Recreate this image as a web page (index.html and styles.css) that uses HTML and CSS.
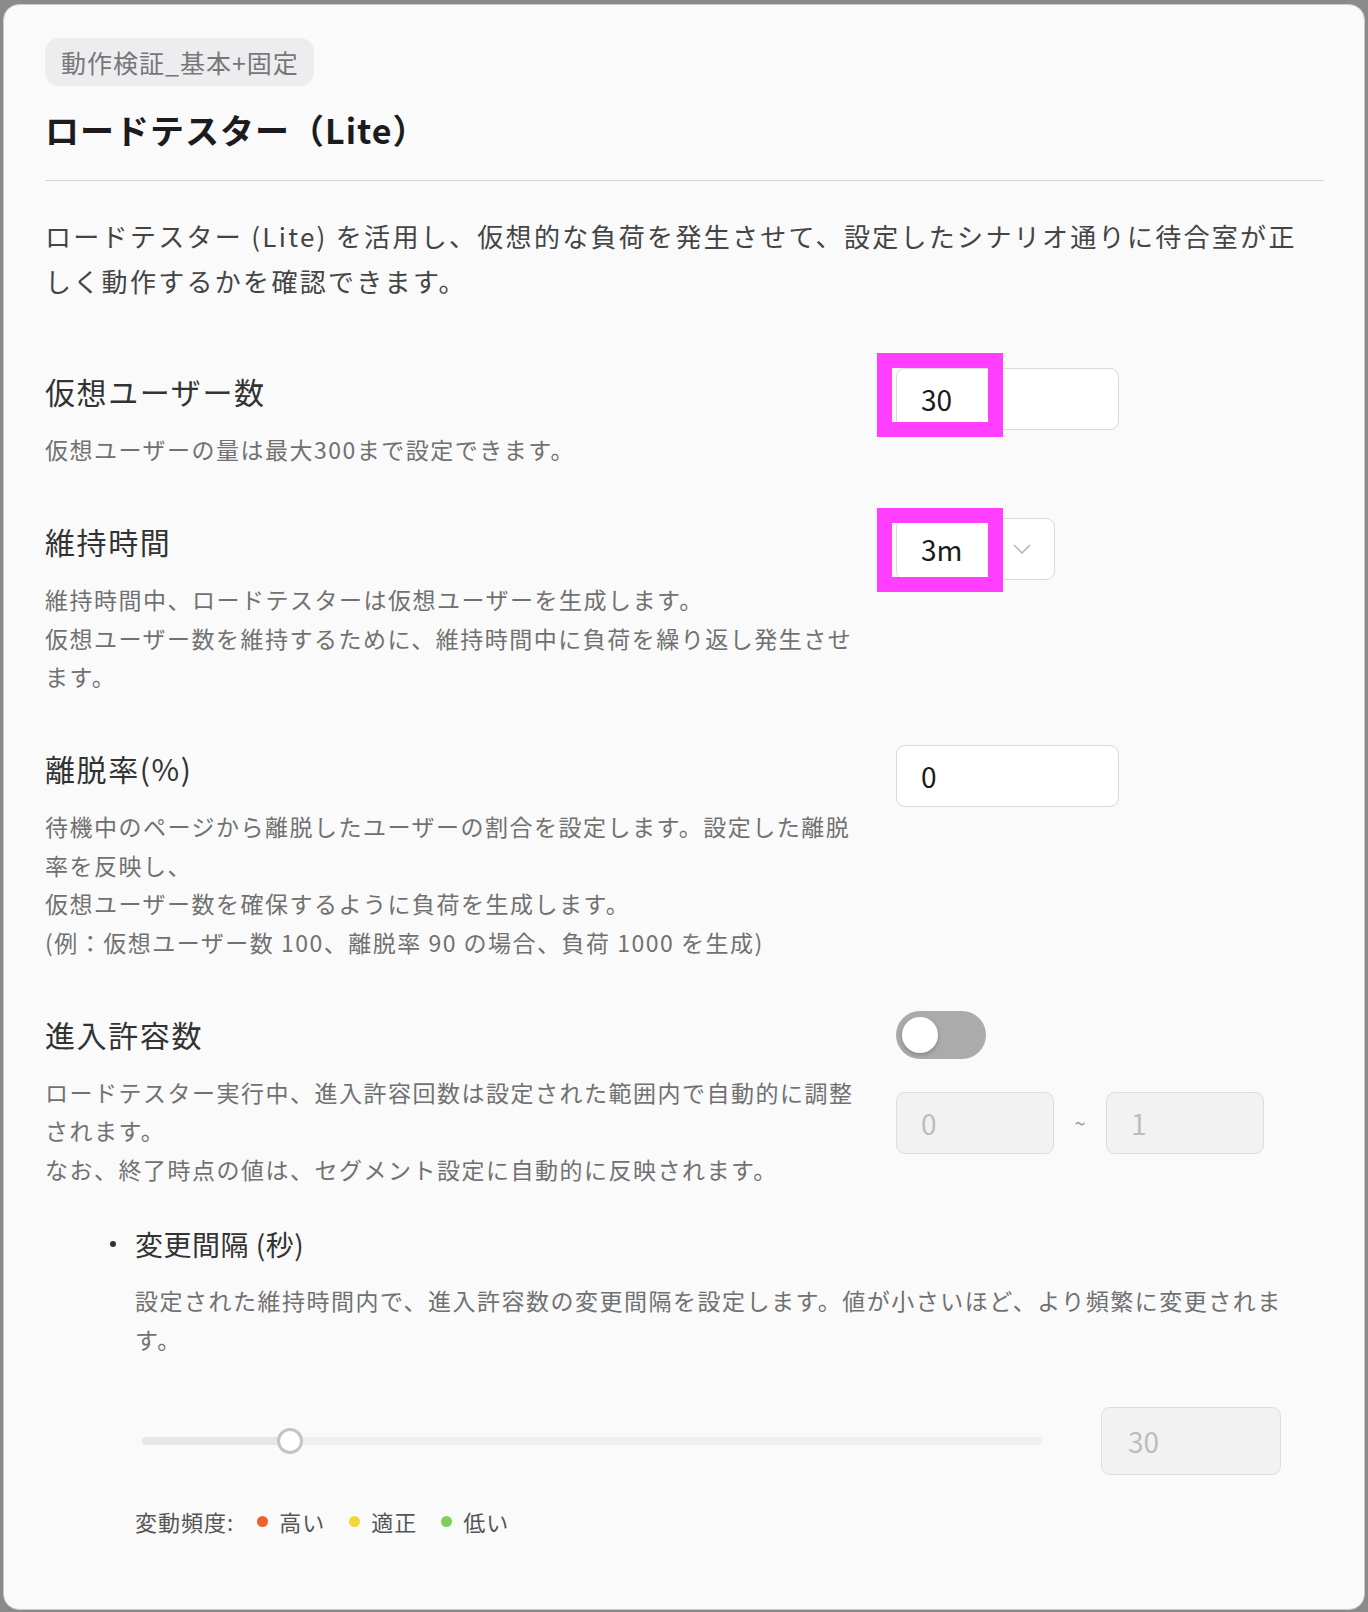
FILE: index.html
```html
<!DOCTYPE html>
<html lang="ja">
<head>
<meta charset="utf-8">
<title>ロードテスター（Lite）</title>
<link rel="stylesheet" href="styles.css">
</head>
<body>
<div class="card">
  <div class="badge">動作検証_基本+固定</div>
  <h1 class="title">ロードテスター（Lite）</h1>
  <div class="divider"></div>
  <p class="intro">ロードテスター (Lite) を活用し、仮想的な負荷を発生させて、設定したシナリオ通りに待合室が正しく動作するかを確認できます。</p>

  <div class="rows">
    <div class="row">
      <div class="info">
        <h2 class="label">仮想ユーザー数</h2>
        <p class="help">仮想ユーザーの量は最大300まで設定できます。</p>
      </div>
      <div class="controls">
        <div class="mark-wrap">
          <div class="field">30</div>
          <div class="mark mark-a"></div>
        </div>
      </div>
    </div>

    <div class="row">
      <div class="info">
        <h2 class="label">維持時間</h2>
        <p class="help">維持時間中、ロードテスターは仮想ユーザーを生成します。<br>仮想ユーザー数を維持するために、維持時間中に負荷を繰り返し発生させます。</p>
      </div>
      <div class="controls">
        <div class="mark-wrap">
          <div class="field select"><span>3m</span><svg class="chev" width="18" height="10" viewBox="0 0 18 10"><path d="M1 1 L9 9 L17 1" fill="none" stroke="#b3b3b3" stroke-width="1.5"/></svg></div>
          <div class="mark mark-b"></div>
        </div>
      </div>
    </div>

    <div class="row">
      <div class="info">
        <h2 class="label">離脱率(%)</h2>
        <p class="help">待機中のページから離脱したユーザーの割合を設定します。設定した離脱率を反映し、<br>仮想ユーザー数を確保するように負荷を生成します。<br>(例：仮想ユーザー数 100、離脱率 90 の場合、負荷 1000 を生成)</p>
      </div>
      <div class="controls">
        <div class="field">0</div>
      </div>
    </div>

    <div class="row">
      <div class="info">
        <h2 class="label">進入許容数</h2>
        <p class="help">ロードテスター実行中、進入許容回数は設定された範囲内で自動的に調整されます。<br>なお、終了時点の値は、セグメント設定に自動的に反映されます。</p>
      </div>
      <div class="controls">
        <div class="toggle"><div class="knob"></div></div>
        <div class="range">
          <div class="field small disabled">0</div>
          <span class="tilde">~</span>
          <div class="field small disabled">1</div>
        </div>
      </div>
    </div>
  </div>

  <div class="sub">
    <div class="sub-title"><span class="bullet"></span><span>変更間隔 (秒)</span></div>
    <p class="help sub-help">設定された維持時間内で、進入許容数の変更間隔を設定します。値が小さいほど、より頻繁に変更されます。</p>

    <div class="slider-row">
      <div class="track">
        <div class="fill"></div>
        <div class="thumb"></div>
      </div>
      <div class="field value disabled">30</div>
    </div>

    <div class="legend">
      <span class="legend-label">変動頻度:</span>
      <span class="dot dot-high"></span><span class="legend-item">高い</span>
      <span class="dot dot-mid"></span><span class="legend-item">適正</span>
      <span class="dot dot-low"></span><span class="legend-item">低い</span>
    </div>
  </div>
</div>
</body>
</html>
```

FILE: styles.css
```css
html, body {
  margin: 0;
  padding: 0;
}

body {
  background: #8a8a8a;
  height: 1612px;
  overflow: hidden;
  font-family: "Noto Sans CJK JP", "Noto Sans", sans-serif;
}

.card {
  margin: 4px 3px 0 3px;
  height: 1606px;
  box-sizing: border-box;
  background: #fafafa;
  border: 1px solid #cbcbcb;
  border-radius: 16px;
  padding: 33px 40px 0 41px;
  overflow: hidden;
}

.badge {
  display: inline-block;
  height: 48px;
  line-height: 48px;
  padding: 0 15px 0 16px;
  background: #ededf0;
  border-radius: 14px;
  font-size: 25px;
  letter-spacing: 1px;
  color: #777;
}

.title {
  margin: 22px 0 0;
  font-size: 34px;
  line-height: 44px;
  font-weight: 700;
  letter-spacing: 1px;
  color: #1c1c1e;
}

.divider {
  margin-top: 28px;
  border-top: 1px solid #d6d6da;
}

.intro {
  margin: 32px 0 0;
  max-width: 1262px;
  font-size: 26px;
  line-height: 45px;
  letter-spacing: 2.3px;
  color: #444;
}

.rows {
  margin-top: 65px;
  display: flex;
  flex-direction: column;
  gap: 49.5px;
}

.row {
  display: grid;
  grid-template-columns: 812px 1fr;
  column-gap: 39px;
  align-items: start;
}

.label {
  margin: 0;
  font-size: 30px;
  line-height: 46px;
  font-weight: 400;
  letter-spacing: 1.6px;
  color: #333;
}

.help {
  margin: 16px 0 0;
  font-size: 23px;
  line-height: 38.5px;
  letter-spacing: 1.5px;
  color: #717171;
}

.controls {
  display: flex;
  flex-direction: column;
  align-items: flex-start;
}

.mark-wrap {
  position: relative;
}

.mark {
  position: absolute;
  left: -19px;
  width: 126px;
  height: 84px;
  box-sizing: border-box;
  border: 15px solid #ff3eff;
}

.mark-a {
  top: -15px;
}

.mark-b {
  top: -10px;
}

.field {
  width: 223px;
  height: 62px;
  box-sizing: border-box;
  border: 1px solid #d9d9d9;
  border-radius: 9px;
  background: #fff;
  padding-left: 24px;
  display: flex;
  align-items: center;
  font-size: 28px;
  color: #1a1a1a;
}

.select {
  width: 159px;
  justify-content: space-between;
  padding-right: 23px;
}

.chev {
  display: block;
}

.field.disabled {
  background: #f2f2f2;
  border-color: #dcdcdc;
  color: #bdbdbd;
}

.field.small {
  width: 158px;
}

.toggle {
  width: 90px;
  height: 48px;
  box-sizing: border-box;
  border-radius: 24px;
  background: #ababab;
  display: flex;
  align-items: center;
  padding: 0 6px;
}

.knob {
  width: 36px;
  height: 36px;
  border-radius: 50%;
  background: #fff;
  box-shadow: 0 2px 4px rgba(0, 0, 0, 0.22);
}

.range {
  margin-top: 33px;
  display: flex;
  align-items: center;
}

.tilde {
  width: 52px;
  text-align: center;
  font-size: 20px;
  color: #9a9a9a;
}

.sub {
  margin-top: 35px;
  padding-left: 90px;
}

.sub-title {
  display: flex;
  align-items: center;
  gap: 19px;
  margin-left: -25px;
  font-size: 28px;
  line-height: 42px;
  letter-spacing: 0.5px;
  color: #333;
}

.bullet {
  width: 6px;
  height: 6px;
  border-radius: 50%;
  background: #333;
}

.sub-help {
  max-width: 1160px;
}

.slider-row {
  margin-top: 49px;
  padding-left: 7px;
  display: flex;
  align-items: center;
}

.track {
  position: relative;
  width: 900px;
  height: 8px;
  border-radius: 4px;
  background: #efefef;
}

.fill {
  width: 148px;
  height: 100%;
  border-radius: 4px;
  background: #e6e6e6;
}

.thumb {
  position: absolute;
  left: 135px;
  top: -9px;
  width: 26px;
  height: 26px;
  box-sizing: border-box;
  border-radius: 50%;
  border: 3px solid #c4c4c4;
  background: #fff;
}

.value {
  width: 180px;
  height: 68px;
  margin-left: 59px;
  padding-left: 26px;
}

.legend {
  margin-top: 30px;
  display: flex;
  align-items: center;
  font-size: 22px;
  line-height: 32px;
  letter-spacing: 1px;
  color: #555;
}

.legend-label {
  margin-right: 23px;
}

.dot {
  width: 11px;
  height: 11px;
  border-radius: 50%;
  margin-right: 11px;
}

.legend-item {
  margin-right: 24px;
}

.dot-high {
  background: #f0612a;
}

.dot-mid {
  background: #f4d53a;
}

.dot-low {
  background: #80cf5c;
}
```
